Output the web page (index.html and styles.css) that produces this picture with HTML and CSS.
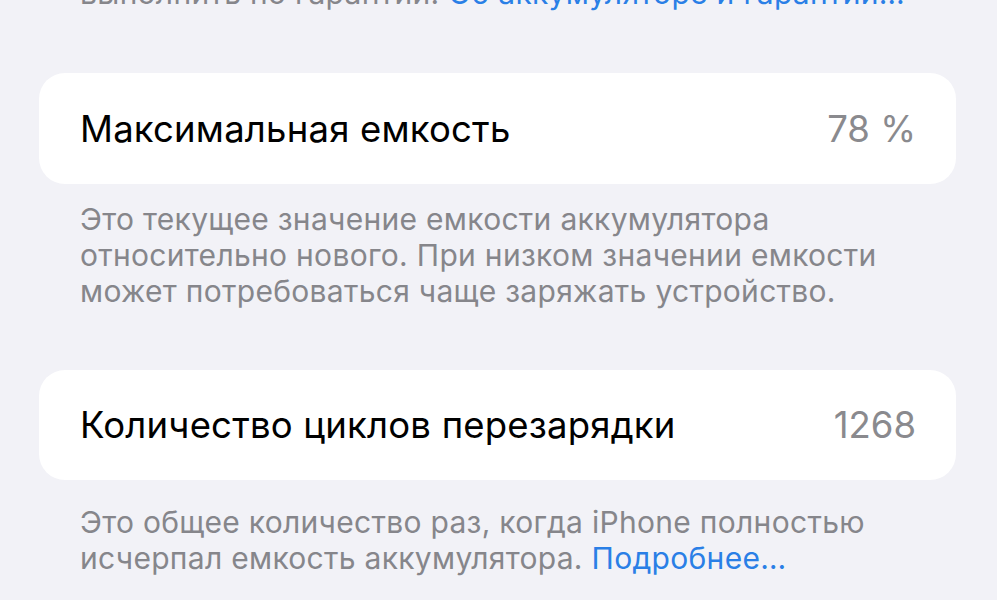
FILE: index.html
```html
<!DOCTYPE html>
<html lang="ru">
<head>
<meta charset="utf-8">
<link rel="stylesheet" href="styles.css">
</head>
<body>
<div class="page">
  <p class="footer footer-top">выполнить по гарантии. <a class="link">Об аккумуляторе и гарантии…</a></p>
  <div class="card">
    <span class="title">Максимальная емкость</span>
    <span class="value">78 %</span>
  </div>
  <p class="footer footer-first">Это текущее значение емкости аккумулятора относительно нового. При низком значении емкости может потребоваться чаще заряжать устройство.</p>
  <div class="card card-second">
    <span class="title">Количество циклов перезарядки</span>
    <span class="value">1268</span>
  </div>
  <p class="footer footer-second">Это общее количество раз, когда iPhone полностью исчерпал емкость аккумулятора. <a class="link">Подробнее…</a></p>
</div>
</body>
</html>
```
FILE: styles.css
```css
html, body {
  margin: 0;
  padding: 0;
  background: #f2f2f7;
}
body {
  font-family: Inter, "Noto Sans", "DejaVu Sans", sans-serif;
  -webkit-font-smoothing: antialiased;
}
.page {
  padding: 0 41px 0 39px;
}
.footer {
  margin: 0;
  padding: 0 41px;
  font-size: 30px;
  line-height: 36px;
  letter-spacing: 0.3px;
  color: #86868b;
}
.footer-top {
  margin-top: -25px;
  white-space: nowrap;
}
.link {
  color: #2a7fe6;
}
.card {
  margin-top: 62px;
  height: 111px;
  background: #ffffff;
  border-radius: 26px;
  padding: 0 40px 0 41px;
  display: flex;
  align-items: center;
  justify-content: space-between;
}
.footer-first {
  margin-top: 17px;
}
.card-second {
  margin-top: 61px;
  height: 110px;
}
.footer-second {
  margin-top: 24px;
}
.title {
  font-size: 36.5px;
  letter-spacing: 0.2px;
  color: #000;
}
.value {
  font-size: 36.5px;
  color: #8a8a8e;
}
```
